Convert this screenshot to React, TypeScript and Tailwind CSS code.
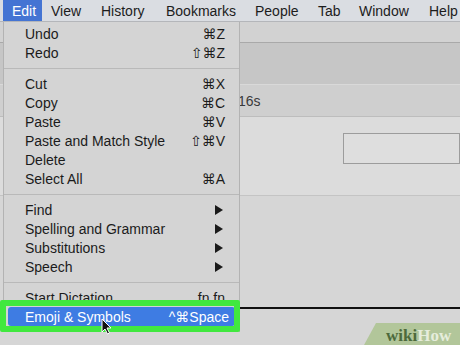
import type { ReactNode } from 'react';

type Row =
    | { kind: 'item'; label: string; shortcut?: string; arrow?: boolean; active?: boolean }
    | { kind: 'sep' };

const rows: Row[] = [
    { kind: 'item', label: 'Undo', shortcut: '⌘Z' },
    { kind: 'item', label: 'Redo', shortcut: '⇧⌘Z' },
    { kind: 'sep' },
    { kind: 'item', label: 'Cut', shortcut: '⌘X' },
    { kind: 'item', label: 'Copy', shortcut: '⌘C' },
    { kind: 'item', label: 'Paste', shortcut: '⌘V' },
    { kind: 'item', label: 'Paste and Match Style', shortcut: '⇧⌘V' },
    { kind: 'item', label: 'Delete' },
    { kind: 'item', label: 'Select All', shortcut: '⌘A' },
    { kind: 'sep' },
    { kind: 'item', label: 'Find', arrow: true },
    { kind: 'item', label: 'Spelling and Grammar', arrow: true },
    { kind: 'item', label: 'Substitutions', arrow: true },
    { kind: 'item', label: 'Speech', arrow: true },
    { kind: 'sep' },
    { kind: 'item', label: 'Start Dictation...', shortcut: 'fn fn' },
    { kind: 'item', label: 'Emoji & Symbols', shortcut: '^⌘Space', active: true },
];

const menuBar = [
    { label: 'View', w: 'w-[50px]' },
    { label: 'History', w: 'w-[65px]' },
    { label: 'Bookmarks', w: 'w-[89px]' },
    { label: 'People', w: 'w-[63px]' },
    { label: 'Tab', w: 'w-[41px]' },
    { label: 'Window', w: 'w-[70px]' },
    { label: 'Help', w: 'w-[40px]' },
];

function Arrow() {
    return (
        <svg width="8" height="10" viewBox="0 0 8 10" className="mr-[2px]">
            <path d="M0 0 L8 5 L0 10 Z" fill="#1a1a1a" />
        </svg>
    );
}

function MenuRow({ row }: { row: Row }): ReactNode {
    if (row.kind === 'sep') {
        return (
            <div className="h-[12px] flex items-center">
                <div className="w-full h-px bg-[#b9b9b9]" />
            </div>
        );
    }
    return (
        <div
            className={
                row.active
                    ? 'h-[19px] mx-[4px] rounded-[3px] bg-[#3e7ce3] text-white flex items-center justify-between pl-[17px] pr-[6px]'
                    : 'h-[19px] flex items-center justify-between pl-[21px] pr-[14px] text-[#1b1b1b]'
            }
        >
            <span>{row.label}</span>
            {row.shortcut && <span>{row.shortcut}</span>}
            {row.arrow && <Arrow />}
        </div>
    );
}

export default function App() {
    return (
        <div className="relative w-[460px] h-[345px] overflow-hidden bg-[#d6d6d6] font-['Liberation_Sans','DejaVu_Sans',sans-serif] text-[14px] leading-none">
            {/* Menu bar */}
            <div className="h-[22px] flex items-stretch pl-[3px] bg-[#dadde2] border-b border-[#b4b6ba] text-[#1c1c1c]">
                <div className="w-[43px] pl-[9px] flex items-center bg-[#4474d3] text-white">Edit</div>
                {menuBar.map((m) => (
                    <div key={m.label} className={`${m.w} pl-[9px] flex items-center shrink-0`}>
                        {m.label}
                    </div>
                ))}
            </div>

            {/* Browser window behind the menu */}
            <div className="h-[21px] bg-[#d2d2d2] border-b border-[#a9a9a9]" />
            <div className="h-[42px] bg-[#c6c6c6] border-b border-[#d9d9d9]" />
            <div className="h-[32px] bg-[#cfcfcf] border-b border-[#bdbdbd] flex items-center pl-[238px] text-[#3a3a3a]">
                16s
            </div>
            <div className="h-[79px] bg-[#dcdcdc] border-b border-[#c4c4c4] pt-[16px] pl-[343px]">
                <div className="h-[31px] border border-[#9c9c9c] bg-[#dedede]" />
            </div>
            <div className="h-[149px] bg-[#d6d6d6] pt-[111px] pl-[240px]">
                <div className="h-[2px] bg-[#111]" />
            </div>

            {/* Edit menu */}
            <div className="absolute left-[3px] top-[22px] w-[237px] h-[310px] pt-[2px] bg-[#d4d4d4] border-l border-r border-[#b3b3b3]">
                {rows.map((r, i) => (
                    <MenuRow key={i} row={r} />
                ))}
            </div>

            {/* Green highlight frame */}
            <div className="absolute left-0 top-[300px] w-[240px] h-[32px] border-[6px] border-[#41e83f] rounded-[2px]" />

            {/* Mouse cursor */}
            <svg className="absolute left-[101px] top-[318px]" width="11" height="17" viewBox="0 0 11 17">
                <path d="M1 1 L1 14 L4 11 L6.5 16 L8.5 15 L6 10 L10 10 Z" fill="#111" stroke="#fff" strokeWidth="1" />
            </svg>

            {/* wikiHow badge */}
            <div className="absolute right-0 bottom-0 w-[96px] h-[22px]">
                <svg className="absolute inset-0" width="96" height="22" viewBox="0 0 96 22">
                    <path d="M12 0 L96 0 L96 22 L0 22 Z" fill="#b2c69a" />
                </svg>
                <div className="relative h-full flex items-center pl-[22px] pt-[2px] font-['Liberation_Serif',serif] font-bold text-[17px]">
                    <span className="text-[#4d6a3c]">wiki</span>
                    <span className="text-[#e6eddc]">How</span>
                </div>
            </div>
        </div>
    );
}
